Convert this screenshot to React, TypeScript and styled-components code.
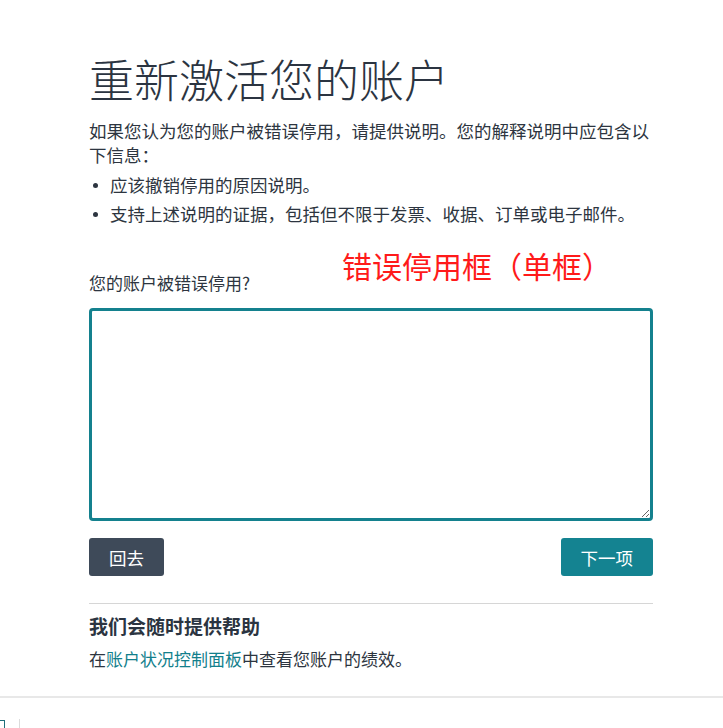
import React from "react";
import styled, { createGlobalStyle } from "styled-components";

const GlobalStyle = createGlobalStyle`
  html, body {
    margin: 0;
    padding: 0;
    background: #ffffff;
  }
  body {
    font-family: "Noto Sans CJK SC", "Noto Sans", "Liberation Sans", sans-serif;
    color: #2d3540;
  }
`;

const Page = styled.div`
  display: flex;
  flex-direction: column;
  min-height: 728px;
  overflow: hidden;
`;

const Main = styled.main`
  width: 564px;
  padding: 53px 0 0 89px;
  display: flex;
  flex-direction: column;
`;

const Title = styled.h1`
  margin: 0;
  font-size: 45px;
  line-height: 52px;
  font-weight: 300;
  color: #2b3441;
`;

const Intro = styled.p`
  margin: 14px 0 0;
  font-size: 17.5px;
  line-height: 24px;
`;

const List = styled.ul`
  margin: 6px 0 0;
  padding: 0;
  list-style: none;
  display: flex;
  flex-direction: column;
  gap: 5px;
`;

const Item = styled.li`
  position: relative;
  padding-left: 21px;
  font-size: 17.5px;
  line-height: 24px;

  &::before {
    content: "";
    position: absolute;
    left: 4px;
    top: 10px;
    width: 5px;
    height: 5px;
    border-radius: 50%;
    background: #2d3540;
  }
`;

const LabelRow = styled.div`
  position: relative;
  margin-top: 45px;
`;

const Label = styled.label`
  display: block;
  font-size: 17px;
  line-height: 24px;
`;

// red note laid over the form, as in the screenshot
const Annotation = styled.span`
  position: absolute;
  left: 253px;
  top: -24px;
  font-size: 30px;
  line-height: 36px;
  color: #ff1a1a;
  white-space: nowrap;
`;

const TextArea = styled.textarea`
  margin-top: 13px;
  height: 213px;
  box-sizing: border-box;
  width: 100%;
  border: 3px solid #14818e;
  border-radius: 4px;
  padding: 8px 10px;
  font-family: inherit;
  font-size: 17px;
  color: #2d3540;
  outline: none;
  resize: both;
`;

const ButtonRow = styled.div`
  display: flex;
  justify-content: space-between;
  margin-top: 17px;
`;

const Button = styled.button<{ $variant: "back" | "next" }>`
  height: 38px;
  padding: 0 20px;
  border: none;
  border-radius: 3px;
  font-family: inherit;
  font-size: 17.5px;
  color: #ffffff;
  cursor: pointer;
  background: ${(p) => (p.$variant === "next" ? "#148391" : "#3e4a59")};
`;

const Divider = styled.hr`
  margin: 27px 0 0;
  border: none;
  border-top: 1px solid #d6d6d6;
`;

const HelpTitle = styled.h2`
  margin: 9px 0 0;
  font-size: 19px;
  line-height: 26px;
  font-weight: 700;
  color: #2b3441;
`;

const HelpText = styled.p`
  margin: 8px 0 0;
  font-size: 17px;
  line-height: 24px;
`;

const Link = styled.a`
  color: #127f8c;
  text-decoration: none;
`;

const Footer = styled.footer`
  margin-top: 25px;
  border-top: 2px solid #e8e8e8;
  height: 30px;
  display: flex;
  align-items: flex-end;
  gap: 14px;
`;

const FooterBadge = styled.span`
  width: 5px;
  height: 7px;
  border: 1px solid #1d6f7a;
  border-left: none;
  border-bottom: none;
  margin-left: -1px;
`;

const FooterSep = styled.span`
  width: 1px;
  height: 9px;
  background: #dcdcdc;
`;

export default function App() {
  return (
    <Page>
      <GlobalStyle />
      <Main>
        <Title>重新激活您的账户</Title>
        <Intro>
          如果您认为您的账户被错误停用，请提供说明。您的解释说明中应包含以下信息：
        </Intro>
        <List>
          <Item>应该撤销停用的原因说明。</Item>
          <Item>支持上述说明的证据，包括但不限于发票、收据、订单或电子邮件。</Item>
        </List>
        <LabelRow>
          <Label htmlFor="reason">您的账户被错误停用?</Label>
          <Annotation>错误停用框（单框）</Annotation>
        </LabelRow>
        <TextArea id="reason" />
        <ButtonRow>
          <Button $variant="back">回去</Button>
          <Button $variant="next">下一项</Button>
        </ButtonRow>
        <Divider />
        <HelpTitle>我们会随时提供帮助</HelpTitle>
        <HelpText>
          在<Link href="#">账户状况控制面板</Link>中查看您账户的绩效。
        </HelpText>
      </Main>
      <Footer>
        <FooterBadge />
        <FooterSep />
      </Footer>
    </Page>
  );
}
